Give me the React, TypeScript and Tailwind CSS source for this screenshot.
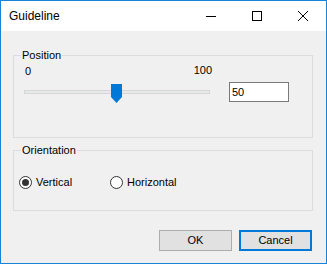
import React from "react";

function Radio({ checked }: { checked: boolean }) {
  return (
    <svg width="13" height="13" viewBox="0 0 13 13" className="shrink-0">
      <circle cx="6.5" cy="6.5" r="6" fill="#ffffff" stroke="#333333" strokeWidth="1" />
      {checked && <circle cx="6.5" cy="6.5" r="3.5" fill="#333333" />}
    </svg>
  );
}

export default function App() {
  return (
    <div className="w-[327px] h-[264px] border border-[#1883d7] bg-[#f0f0f0] flex flex-col font-['Liberation_Sans',Arial,sans-serif] text-[11px] leading-[13px] text-black select-none">
      {/* Title bar */}
      <div className="h-[30px] bg-white flex items-center shrink-0">
        <div className="pl-[8px] text-[12px] leading-[14px] flex-1">Guideline</div>
        <div className="flex h-full">
          <div className="w-[46px] h-full flex items-center justify-center">
            <svg width="10" height="10" viewBox="0 0 10 10">
              <line x1="0" y1="5.5" x2="10" y2="5.5" stroke="#000" strokeWidth="1" />
            </svg>
          </div>
          <div className="w-[46px] h-full flex items-center justify-center">
            <svg width="10" height="10" viewBox="0 0 10 10">
              <rect x="0.5" y="0.5" width="9" height="9" fill="none" stroke="#000" strokeWidth="1" />
            </svg>
          </div>
          <div className="w-[46px] h-full flex items-center justify-center">
            <svg width="10" height="10" viewBox="0 0 10 10">
              <path d="M0 0 L10 10 M10 0 L0 10" stroke="#000" strokeWidth="1" />
            </svg>
          </div>
        </div>
      </div>

      {/* Body */}
      <div className="pl-[12px] flex flex-col">
        {/* Position group */}
        <div className="relative mt-[24px] w-[300px] h-[83px] border border-[#dcdcdc]">
          <span className="absolute -top-[7px] left-[7px] px-[1px] bg-[#f0f0f0]">Position</span>
          <div className="pt-[8px] pl-[10px] flex flex-col">
            <div className="w-[188px] h-[13px] flex justify-between items-start">
              <span className="ml-[1px] mt-[1px]">0</span>
              <span>100</span>
            </div>
            <div className="mt-[5px] flex items-start">
              <div className="relative w-[186px] h-[20px]">
                <div className="absolute left-0 top-[8px] w-[186px] h-[4px] border border-[#d6d6d6] bg-[#e7eaea]" />
                <svg
                  className="absolute left-[87px] top-[2px]"
                  width="11"
                  height="19"
                  viewBox="0 0 11 19"
                >
                  <path d="M0 0 H11 V13 L5.5 19 L0 13 Z" fill="#0078d7" />
                </svg>
              </div>
              <div className="ml-[19px] w-[60px] h-[20px] border border-[#7a7a7a] bg-white flex items-center pl-[2px]">
                50
              </div>
            </div>
          </div>
        </div>

        {/* Orientation group */}
        <div className="relative mt-[12px] w-[300px] h-[61px] border border-[#dcdcdc]">
          <span className="absolute -top-[7px] left-[7px] px-[1px] bg-[#f0f0f0]">Orientation</span>
          <div className="pt-[25px] pl-[5px] flex items-center">
            <div className="flex items-center w-[91px]">
              <Radio checked />
              <span className="ml-[4px]">Vertical</span>
            </div>
            <div className="flex items-center">
              <Radio checked={false} />
              <span className="ml-[4px]">Horizontal</span>
            </div>
          </div>
        </div>

        {/* Buttons */}
        <div className="mt-[19px] flex pl-[146px] gap-[7px]">
          <div className="w-[73px] h-[21px] border border-[#adadad] bg-[#e1e1e1] flex items-center justify-center">
            OK
          </div>
          <div className="w-[73px] h-[21px] border-2 border-[#0078d7] bg-[#e1e1e1] flex items-center justify-center">
            Cancel
          </div>
        </div>
      </div>
    </div>
  );
}
